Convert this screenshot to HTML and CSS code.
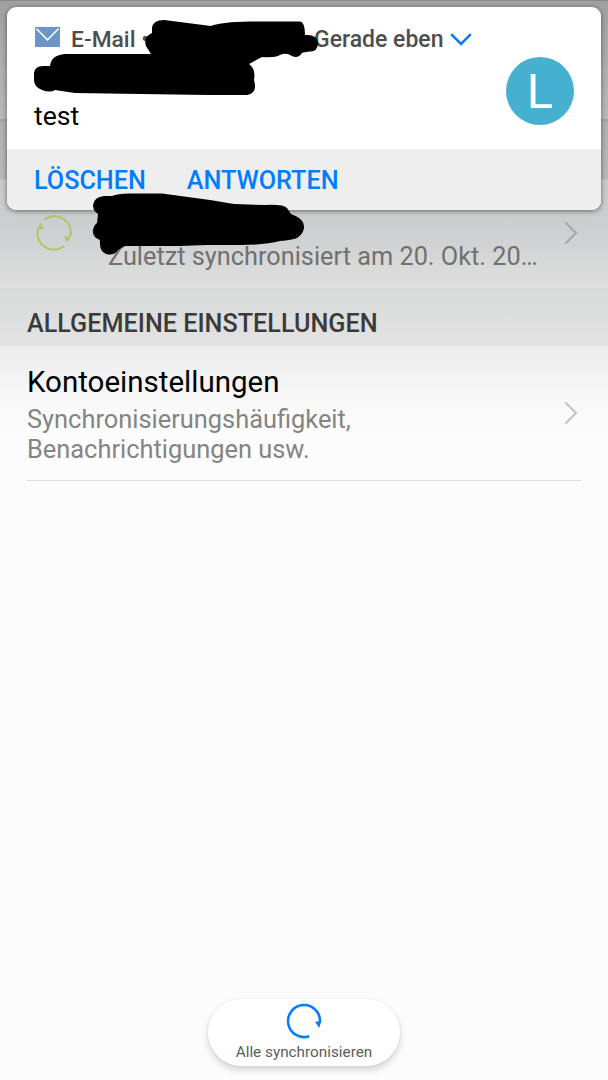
FILE: index.html
```html
<!DOCTYPE html>
<html lang="de">
<head>
<meta charset="utf-8">
<title>E-Mail Einstellungen</title>
<link rel="stylesheet" href="styles.css">
</head>
<body>
<main class="screen">
  <header class="appbar"></header>
  <div class="section section-accounts"></div>
  <div class="row account">
    <svg class="sync" viewBox="0 0 36 36"><g fill="none" stroke="#b0c46a" stroke-width="2"><path d="M8.500 4.600A16.200 16.200 0 0 1 34 22"/><path d="M28 31A16.200 16.200 0 0 1 2.200 14"/></g><path d="M28 21.500l6.500.5-3.400 5.500zM1.500 14L4.700 7.500l3 6.800z" fill="#b0c46a"/></svg>
    <p class="summary synced">Zuletzt synchronisiert am 20. Okt. 20…</p>
    <svg class="chevron" viewBox="0 0 14 24"><path d="M2 2l10 10L2 22"/></svg>
  </div>
  <h2 class="section">ALLGEMEINE EINSTELLUNGEN</h2>
  <div class="general">
    <div class="row entry">
      <div class="copy">
        <h3 class="title">Kontoeinstellungen</h3>
        <p class="summary">Synchronisierungshäufigkeit,<br>Benachrichtigungen usw.</p>
      </div>
      <svg class="chevron" viewBox="0 0 14 24"><path d="M2 2l10 10L2 22"/></svg>
    </div>
  </div>
  <button class="sync-all">
    <svg class="refresh" viewBox="0 0 36 36"><path d="M23.200 33.200A16 16 0 1 1 34 19" fill="none" stroke="#007dff" stroke-width="2.500"/><path d="M29 18.800l6.400-.8-2.200 7z" fill="#007dff"/></svg>
    <span>Alle synchronisieren</span>
  </button>
  <section class="notification">
    <div class="message">
      <div class="content">
        <div class="meta">
          <svg class="mail" viewBox="0 0 25 20"><path d="M0 0h25v20H0z" fill="#6b96c9"/><path d="M1.500 1.700l11 11.200L23.500 1.700" fill="none" stroke="#fff" stroke-width="1.500"/></svg>
          <span class="app">E-Mail •</span>
          <span class="time">Gerade eben</span>
          <svg class="expand" viewBox="0 0 22 13"><path d="M1.200 1.200L11 11l9.800-9.800" fill="none" stroke="#007dff" stroke-width="2.500"/></svg>
        </div>
        <p class="body">test</p>
      </div>
      <div class="avatar">L</div>
    </div>
    <div class="actions"><span class="delete">LÖSCHEN</span><span class="reply">ANTWORTEN</span></div>
  </section>
  <svg class="redaction" viewBox="0 0 608 270">
    <path d="M152 28Q153 20 164 20L211 26Q221 22 250 21.500H300Q305 22 305 35Q318 34 318 44Q317 52 310 51.500Q304 52 302 53Q298 59 292 56Q286 52 280 55Q275 58 262 57L249 64Q256 69 254 80Q258 93 247 95H209L140 94L75 93L55 90Q50 93 42 90Q34 87 34 80V73Q35 66 43 66H50Q51 55 65 54H151L146 46Q143 37 152 33Z"/>
    <path d="M93 205Q94 197 104 196H112Q117 193.500 130 193.500H162L210 200L234 204L265 205Q283 204 287 208L291 214Q305 219 304 228Q303 234 297 238Q292 240 280 241Q265 245 240 245H207L180 246H125L118 250Q114 256 106 254Q99 251 100 240Q92 237 93 230Q94 225 97 223L98 214Q93 211 93 205Z"/>
  </svg>
</main>
</body>
</html>
```
FILE: styles.css
```css
* { box-sizing: border-box; }
body { margin: 0; font-family: Roboto, sans-serif; }
h2, h3, p { margin: 0; font-weight: 400; }
svg { display: block; flex: none; }

.screen { position: relative; display: flex; flex-direction: column; width: 608px; height: 1080px; overflow: hidden; background: #fcfcfc; }
.appbar { height: 121px; background: linear-gradient(#a0a0a0, #bababa); border-top: 1px solid #898989; border-bottom: 2px solid #a4a4a4; flex: none; }
.section { height: 58px; padding: 0 27px; flex: none; font-size: 25.2px; font-weight: 500; line-height: 71px; color: #3a3a3a; background: linear-gradient(#d8d9d9, #e3e3e3); white-space: nowrap; }
.section-accounts { background: linear-gradient(#b1b1b1, #b8b8b8); }

.row { display: flex; flex: none; }
.account { height: 109px; padding: 36px 30px 0 36px; background: linear-gradient(#c7c9ca, #cccecf 45%, #dfdfdf); }
.sync { width: 36px; height: 36px; }
.summary { font-size: 25.4px; line-height: 30px; color: #848484; white-space: nowrap; }
.synced { padding: 27px 0 0 36px; font-size: 25.3px; color: #707070; flex: 1; }
.chevron { width: 14px; height: 24px; margin-top: 6px; fill: none; stroke: #a9a9a9; stroke-width: 2.2; stroke-linecap: round; }
.general { padding: 0 27px; background: linear-gradient(#ececec, #f9f9f9 43%, #fcfcfc 70%); }
.entry { justify-content: space-between; height: 135px; padding: 18px 3px 0 0; border-bottom: 1px solid #dedede; }
.entry .summary { margin-top: 4px; }
.entry .chevron { margin-top: 37px; stroke: #c4c4c4; }
.title { font-size: 29.5px; line-height: 36px; color: #000; }

.sync-all { display: flex; flex-direction: column; align-items: center; width: 192px; height: 67px; margin: auto auto 14px 208px; padding: 4px 0 0; border: 0; border-radius: 34px; background: #fff; color: #5c5c5c; font: 15.3px/20px Roboto, sans-serif; box-shadow: 0 4px 7px rgba(0,0,0,.17), 0 0 2px rgba(0,0,0,.06); }
.refresh { width: 36px; height: 36px; margin-bottom: 3px; }

.notification { position: absolute; left: 7px; top: 7px; width: 594px; height: 203px; border-radius: 9px; overflow: hidden; background: #fff; box-shadow: 0 1px 5px rgba(0,0,0,.5); }
.message { display: flex; justify-content: space-between; height: 142px; padding: 0 27px; }
.meta { display: flex; align-items: center; height: 32px; margin-top: 16px; font-size: 23px; font-weight: 500; color: #4d4d4d; white-space: nowrap; }
.mail { width: 25px; height: 20px; margin: -4px 11px 0 1px; }
.app { width: 243px; font-size: 22.8px; }
.expand { width: 22px; height: 13px; margin-left: 7px; }
.body { margin-top: 45px; font-size: 26.6px; line-height: 32px; color: #000; }
.avatar { width: 68px; height: 68px; margin-top: 49.5px; border-radius: 50%; background: #45b0cf; color: #fff; font-size: 49px; line-height: 69px; text-align: center; }
.actions { display: flex; height: 61px; padding-left: 27px; gap: 41px; background: #eee; color: #007dff; font-size: 25.2px; font-weight: 500; line-height: 64px; }

.redaction { position: absolute; left: 0; top: 0; width: 608px; height: 270px; fill: #000; }
```
